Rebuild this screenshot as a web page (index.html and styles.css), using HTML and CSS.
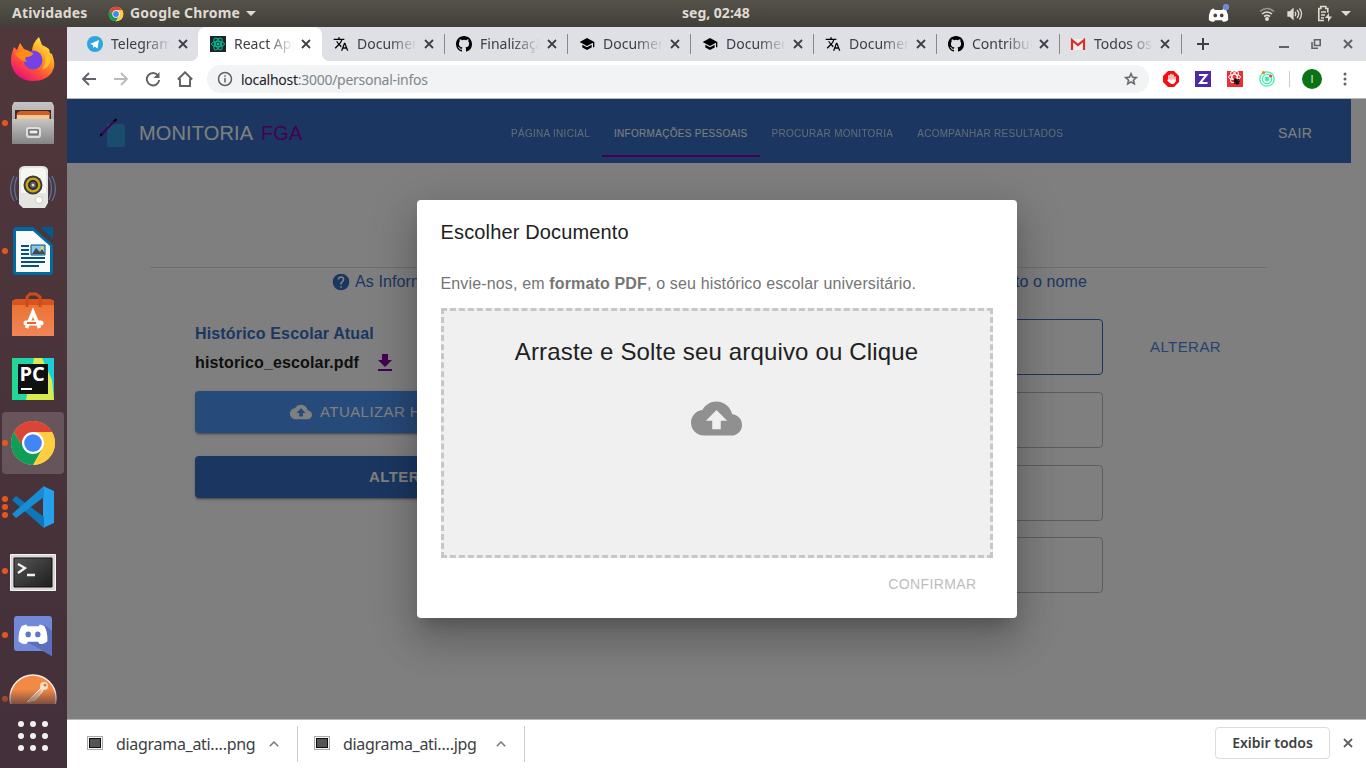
FILE: index.html
```html
<!DOCTYPE html>
<html lang="pt-BR">
<head>
<meta charset="utf-8">
<title>Monitoria FGA</title>
<link rel="stylesheet" href="styles.css">
</head>
<body>
<svg class="defs" width="0" height="0">
  <defs>
    <symbol id="close" viewBox="0 0 16 16"><path d="M4 4l8 8M12 4l-8 8" fill="none" stroke="currentColor" stroke-width="1.8"/></symbol>
    <symbol id="translate" viewBox="0 0 24 24"><path d="M12.87 15.07l-2.54-2.51.03-.03A17.52 17.52 0 0 0 14.07 6H17V4h-7V2H8v2H1v2h11.17C11.5 7.92 10.44 9.75 9 11.35 8.07 10.32 7.3 9.19 6.69 8h-2c.73 1.63 1.73 3.17 2.98 4.56l-5.09 5.02L4 19l5-5 3.11 3.11.76-2.04zM18.5 10h-2L12 22h2l1.12-3h4.75L21 22h2l-4.500-12zm-2.620 7l1.620-4.330L19.120 17h-3.240z"/></symbol>
    <symbol id="github" viewBox="0 0 16 16"><path d="M8 0C3.580 0 0 3.580 0 8c0 3.540 2.290 6.530 5.470 7.590.4.070.550-.170.550-.380 0-.190-.010-.820-.010-1.490-2.010.370-2.530-.490-2.690-.940-.090-.230-.480-.940-.820-1.130-.280-.150-.680-.520-.010-.530.630-.010 1.080.580 1.230.820.720 1.210 1.870.870 2.330.660.070-.520.280-.870.510-1.070-1.780-.2-3.640-.890-3.640-3.950 0-.870.310-1.590.820-2.150-.080-.2-.360-1.020.080-2.120 0 0 .670-.210 2.200.820a7.600 7.600 0 0 1 4 0c1.530-1.040 2.200-.820 2.200-.820.440 1.100.160 1.920.080 2.120.510.560.820 1.270.820 2.150 0 3.070-1.870 3.750-3.650 3.950.290.250.540.730.540 1.480 0 1.070-.010 1.930-.010 2.200 0 .210.150.460.550.380A8 8 0 0 0 16 8c0-4.420-3.580-8-8-8z"/></symbol>
    <symbol id="school" viewBox="0 0 24 24"><path d="M5 13.180v4L12 21l7-3.820v-4L12 17l-7-3.820zM12 3L1 9l11 6 9-4.910V17h2V9L12 3z"/></symbol>
    <symbol id="cloud" viewBox="0 0 24 24"><path d="M19.350 10.040C18.670 6.590 15.640 4 12 4 9.110 4 6.600 5.640 5.350 8.040 2.340 8.360 0 10.910 0 14c0 3.310 2.690 6 6 6h13c2.760 0 5-2.240 5-5 0-2.640-2.050-4.780-4.650-4.960zM14 13v4h-4v-4H7l5-5 5 5h-3z"/></symbol>
    <symbol id="chrome" viewBox="0 0 48 48"><circle cx="24" cy="24" r="22" fill="#ffcd40"/><path d="M4.950 13A22 22 0 0 1 43.050 13H24L14.500 29.500z" fill="#db4437"/><path d="M4.950 13A22 22 0 0 0 24 46L33.500 29.500 24 24H11.300z" fill="#0f9d58"/><path d="M24 13h19.050A22 22 0 0 1 24 46L33.500 29.500z" fill="#ffcd40"/><circle cx="24" cy="24" r="11" fill="#fff"/><circle cx="24" cy="24" r="8.800" fill="#4285f4"/></symbol>
    <symbol id="discord" viewBox="0 0 32 24"><path d="M9 2.500Q6 3 4 4.500Q.5 11 1 20Q4 23 9 23l1.800-2.500h10.400L23 23q5 0 8-3 .5-9-3-15.500Q26 3 23 2.500l-1 2H10z" fill="#fff"/><ellipse cx="11" cy="13" rx="2.800" ry="3" fill="var(--eye)"/><ellipse cx="21" cy="13" rx="2.800" ry="3" fill="var(--eye)"/></symbol>
    <symbol id="picture" viewBox="0 0 16 14"><rect x=".5" y=".5" width="15" height="13" fill="#f5f5f5" stroke="#aaa"/><rect x="2.500" y="2.500" width="11" height="9" fill="#555" stroke="#111"/></symbol>
    <linearGradient id="fire" x1="1" y1="0" x2=".3" y2="1"><stop offset=".1" stop-color="#fff44f"/><stop offset=".45" stop-color="#ff9a20"/><stop offset=".75" stop-color="#ff4540"/><stop offset="1" stop-color="#e8107d"/></linearGradient>
    <linearGradient id="metal" x1="0" y1="0" x2="0" y2="1"><stop offset="0" stop-color="#c4c4c4"/><stop offset="1" stop-color="#858585"/></linearGradient>
    <linearGradient id="orange" x1="0" y1="0" x2="0" y2="1"><stop offset="0" stop-color="#e8702c"/><stop offset="1" stop-color="#f28558"/></linearGradient>
    <linearGradient id="dark" x1="0" y1="0" x2="1" y2="1"><stop offset="0" stop-color="#555"/><stop offset="1" stop-color="#1e1e1e"/></linearGradient>
    <linearGradient id="jet" x1="0" y1="0" x2="1" y2="0"><stop offset="0" stop-color="#22d88f"/><stop offset="1" stop-color="#18cfe0"/></linearGradient>
  </defs>
</svg>

<header class="topbar">
  <span class="topbar-act">Atividades</span>
  <svg class="topbar-chrome"><use href="#chrome"/></svg>
  <span class="topbar-app">Google Chrome</span>
  <i class="caret"></i>
  <span class="topbar-clock">seg, 02:48</span>
  <div class="tray">
    <svg width="22" height="20" viewBox="0 0 22 20" style="--eye:#46443d"><use href="#discord" x="0" y="3" width="21" height="15.500"/><circle cx="18" cy="3" r="3.200" fill="#7289da"/></svg>
    <svg class="tray-wifi" width="16" height="14" viewBox="0 0 16 14" fill="none" stroke="#dfdbd2" stroke-width="1.600"><path d="M1 4.500q7-6 14 0" opacity=".5"/><path d="M3 7q5-4 10 0M5 9.500q3-2.200 6 0"/><circle cx="8" cy="12" r="1.200" fill="#dfdbd2"/></svg>
    <svg class="tray-vol" width="16" height="14" viewBox="0 0 16 14" fill="none" stroke="#dfdbd2" stroke-width="1.300"><path d="M1 5h2l3-3v10L3 9H1z" fill="#dfdbd2"/><path d="M8 5q1.500 2 0 4M10 3q3.500 4 0 8M12.500 1.500q4 5.500 0 11"/></svg>
    <svg class="tray-bat" width="15" height="17" viewBox="0 0 15 17" fill="none" stroke="#dfdbd2" stroke-width="1.600"><path d="M7 15.500H1.800V3.500h2V1.500h5v2h2v4M4 7h5M4 10h4M4 13h3"/><path d="M12 8l-4 5h3v4l4-5.500h-3z" fill="#dfdbd2" stroke="none"/></svg>
    <i class="caret"></i>
  </div>
</header>

<div class="desktop">
  <nav class="dock">
    <div class="dock-item"><svg viewBox="0 0 48 48"><path d="M24 46C11 46 2 37 2 25c0-6 2-10 3-13l3 3 3-7 4 6 8 3q0-9 7-15l3 8 4 2 3 2 1 4 2 1q4 10 1 16C41 43 32 46 24 46z" fill="url(#fire)"/><circle cx="24" cy="25" r="9.500" fill="#7542e5"/><path d="M6 19q6-5 13-3l5 2c0 3-4 4-7 4q-2 2 1 5-7-1-12-8z" fill="#ff8a16"/><path d="M33 15q7 9 0 20 8-3 9-12z" fill="#ffc02c"/></svg></div>
    <div class="dock-item run"><svg viewBox="0 0 48 48"><path d="M5 3h38l2 4v38H3V7z" fill="url(#metal)"/><path d="M6 11h36v10H6z" fill="#392d2a"/><path d="M8 14l3-2h28l2 2v7H7z" fill="#d15f25"/><path d="M8 16h32v4H8z" fill="#f3ca94"/><path d="M3 20h42v25H3z" fill="url(#metal)"/><rect x="18" y="29" width="13" height="9" rx="2" fill="#999" stroke="#ddd" stroke-width="2"/><path d="M20 31h9v4h-9z" fill="#eee" stroke="#555"/></svg></div>
    <div class="dock-item"><svg viewBox="0 0 48 48"><path d="M5 13q-7 13 0 25M8 14q-5 11 0 23M43 13q7 13 0 25M40 14q5 11 0 23" fill="none" stroke="#59739b" stroke-width="1.300"/><path d="M10 7q1-4 6-4h17q5 0 6 4v33l-3 5H14l-4-4z" fill="#e4e4e1"/><path d="M12 8q1-3 5-3h15q4 0 5 3v22H12z" fill="#f6f6f4"/><circle cx="24" cy="22" r="9.500" fill="#3b3c3a"/><circle cx="24" cy="22" r="7.500" fill="#c5a51a"/><circle cx="24" cy="22" r="4.200" fill="#555" stroke="#222" stroke-width="1.500"/><circle cx="24" cy="22" r="1.500" fill="#ddd"/><circle cx="30" cy="37" r="3.500" fill="#fff" stroke="#ccc"/></svg></div>
    <div class="dock-item run"><svg viewBox="0 0 48 48"><path d="M6 0h19l19 17v28q0 3-3 3H7q-3 0-3-3V3z" fill="#0369a3"/><path d="M24 0l20 18V12L31 0z" fill="#4b353a"/><path d="M31 0h13v12z" fill="#06598c"/><path d="M7 4h17l17 15v26H7z" fill="#fafafa"/><path d="M24 4l17 15V19z" fill="#ddd"/><path d="M12 19h8M12 23h8M12 27h8M12 31h24M12 35h24M12 39h18" stroke="#05517f" stroke-width="2"/><path d="M22 18h14v10H22z" fill="#82c8ee" stroke="#05517f"/><path d="M23 27l4-6 4 4 2-3 3 5z" fill="#424b48"/><circle cx="33" cy="21" r="1.500" fill="#ffd320"/></svg></div>
    <div class="dock-item"><svg viewBox="0 0 48 48"><path d="M3 10l4-2h34l4 2v35H3z" fill="url(#orange)"/><path d="M3 10l4-2h34l4 2v4H3z" fill="#d9531e"/><path d="M18 16V6l3-3h6l4 3v10" fill="none" stroke="#ce4b1b" stroke-width="3"/><path d="M17.500 37l6.500-16 6.500 16" fill="none" stroke="#fff" stroke-width="3.500"/><path d="M17 32h15" stroke="#fff" stroke-width="5" stroke-linecap="round"/><path d="M18 32h9" stroke="#e8622a" stroke-width="2"/></svg></div>
    <div class="dock-item"><svg viewBox="0 0 48 48"><path d="M3 3h42v42H3z" fill="url(#jet)"/><path d="M25 3h8l10 22 2 20H17z" fill="#d8ed4d"/><path d="M9 9h30v30H9z" fill="#101010"/><text x="10.500" y="26" class="pc-text">PC</text><path d="M12 34h11" stroke="#fff" stroke-width="2"/></svg></div>
    <div class="dock-item run active"><svg viewBox="0 0 48 48"><use href="#chrome" x="0" y="0" width="48" height="48"/></svg></div>
    <div class="dock-item run multi"><svg viewBox="0 0 48 48"><path d="M34 3l11 5v32l-11 5z" fill="#27a0ec"/><path d="M3 17l4-4 28 21v11z" fill="#0d77ba"/><path d="M3 31l4 4 28-21V3z" fill="#198dd4"/></svg></div>
    <div class="dock-item run"><svg viewBox="0 0 48 48"><path d="M1.500 7.500h45v36h-45z" fill="#d8d8d6" stroke="#f4f4f4"/><path d="M5 11h38v29H5z" fill="url(#dark)" stroke="#111"/><path d="M9 17l7 4-7 5M18 28h8" fill="none" stroke="#f1f1ee" stroke-width="2.300"/></svg></div>
    <div class="dock-item run"><svg viewBox="0 0 48 48" style="--eye:#6077c5"><path d="M8 5h32q3 0 3 3v37l-9-5H8q-3 0-3-3V8q0-3 3-3z" fill="#7289da"/><path d="M18 31l16 9 9 5V20L36 14z" fill="#5b70bd"/><use href="#discord" x="8.500" y="11" width="31" height="23"/></svg></div>
    <div class="dock-item run last"><svg viewBox="0 0 48 48"><circle cx="24" cy="24" r="23" fill="#f28a45" stroke="#f7eee8" stroke-width="1.500"/><path d="M32 14L18 28l8-2 8-9z" fill="#f5c6a2" stroke="#fff"/><circle cx="35" cy="12" r="4" fill="#f7dfcb"/><circle cx="36" cy="11" r="1.500" fill="#d17b40"/></svg></div>
    <div class="dock-apps"><i></i><i></i><i></i><i></i><i></i><i></i><i></i><i></i><i></i></div>
  </nav>

  <main class="browser">
    <div class="tabs">
      <div class="tab"><svg class="fav" viewBox="0 0 16 16"><circle cx="8" cy="8" r="8" fill="#2ca5e0"/><path d="M3 8l9-4-1.500 8.500-3-2-1.500 1.500v-3z" fill="#fff"/></svg><span>Telegram</span><svg class="x"><use href="#close"/></svg></div>
      <div class="tab current"><svg class="fav" viewBox="0 0 16 16"><path d="M0 0h16v16H0z" fill="#20232a"/><g fill="none" stroke="#00c49a"><ellipse cx="8" cy="8" rx="6.500" ry="2.700"/><ellipse cx="8" cy="8" rx="6.500" ry="2.700" transform="rotate(60 8 8)"/><ellipse cx="8" cy="8" rx="6.500" ry="2.700" transform="rotate(120 8 8)"/></g><circle cx="8" cy="8" r="1.500" fill="#00c49a"/></svg><span>React App</span><svg class="x"><use href="#close"/></svg></div>
      <div class="tab sep"><svg class="fav"><use href="#translate"/></svg><span>Documento</span><svg class="x"><use href="#close"/></svg></div>
      <div class="tab sep"><svg class="fav"><use href="#github"/></svg><span>Finalização</span><svg class="x"><use href="#close"/></svg></div>
      <div class="tab sep"><svg class="fav"><use href="#school"/></svg><span>Documento</span><svg class="x"><use href="#close"/></svg></div>
      <div class="tab sep"><svg class="fav"><use href="#school"/></svg><span>Documento</span><svg class="x"><use href="#close"/></svg></div>
      <div class="tab sep"><svg class="fav"><use href="#translate"/></svg><span>Documento</span><svg class="x"><use href="#close"/></svg></div>
      <div class="tab sep"><svg class="fav"><use href="#github"/></svg><span>Contributors</span><svg class="x"><use href="#close"/></svg></div>
      <div class="tab sep final"><svg class="fav" viewBox="0 0 16 16"><path d="M1 3h14v11H1z" fill="#eee"/><path d="M2 14V4l6 5 6-5v10" fill="none" stroke="#d93025" stroke-width="2.200"/></svg><span>Todos os</span><svg class="x"><use href="#close"/></svg></div>
      <svg class="plus" viewBox="0 0 14 14"><path d="M7 1v12M1 7h12" stroke="#3c4043" stroke-width="2"/></svg>
      <div class="win">
        <svg width="10" height="10"><path d="M0 8h10" stroke="#5f6368" stroke-width="2"/></svg>
        <svg width="10" height="10" fill="none" stroke="#5f6368" stroke-width="1.600"><path d="M3.500.8h5.700v5.700H3.500zM1 3v6.200h6"/></svg>
        <svg width="10" height="10"><path d="M1 1l8 8M9 1l-8 8" stroke="#5f6368" stroke-width="2"/></svg>
      </div>
    </div>

    <div class="toolbar">
      <svg class="tool" viewBox="0 0 16 16"><path d="M15 8H2M8 2L2 8l6 6"/></svg>
      <svg class="tool dim" viewBox="0 0 16 16"><path d="M1 8h13M8 2l6 6-6 6"/></svg>
      <svg class="tool" viewBox="0 0 16 16"><path d="M13 4.500A6.200 6.200 0 1 0 14.200 9"/><path d="M14.500 1v6h-6z" fill="#5f6368" stroke="none"/></svg>
      <svg class="tool" viewBox="0 0 16 16"><path d="M.8 8.500L8 1.300l7.200 7.200M3 7.500V15h10V7.500"/></svg>
      <div class="omni">
        <svg width="16" height="16" viewBox="0 0 16 16" fill="none" stroke="#5f6368" stroke-width="1.500"><circle cx="8" cy="8" r="6.500"/><path d="M8 7v4.500M8 4.200v1.600"/></svg>
        <span class="url"><b>localhost</b>:3000/personal-infos</span>
        <svg class="star" width="16" height="16" viewBox="0 0 24 24"><path d="M22 9.240l-7.190-.620L12 2 9.190 8.630 2 9.240l5.460 4.730L5.820 21 12 17.270 18.180 21l-1.630-7.030L22 9.240zM12 15.400l-3.760 2.270 1-4.280-3.320-2.880 4.380-.380L12 6.100l1.710 4.040 4.380.380-3.320 2.880 1 4.280L12 15.400z" fill="#5f6368" stroke="#5f6368" stroke-width=".7"/></svg>
      </div>
      <svg class="ext" viewBox="0 0 16 16"><path d="M5 0h6l5 5v6l-5 5H5l-5-5V5z" fill="#f40d12"/><path d="M6 4.500v5M8 3.500v5M10 4v5M12 6v4" stroke="#fff" stroke-width="1.400" stroke-linecap="round"/><path d="M5.300 8.500h7.400q0 4.500-3.500 4.500Q7 13 4 9z" fill="#fff"/></svg>
      <svg class="ext" viewBox="0 0 16 16"><path d="M0 0h16v16H0z" fill="#4c2ba1"/><path d="M4 4h7.500L5 12h7.500" fill="none" stroke="#fff" stroke-width="2"/></svg>
      <svg class="ext" viewBox="0 0 16 16"><path d="M0 0h16v16H0z" fill="#ec2f35"/><g fill="none" stroke="#fff"><ellipse cx="7.500" cy="6" rx="6" ry="2.500"/><ellipse cx="7.500" cy="6" rx="6" ry="2.500" transform="rotate(60 7.500 6)"/><ellipse cx="7.500" cy="6" rx="6" ry="2.500" transform="rotate(120 7.500 6)"/></g><ellipse cx="9.500" cy="10.500" rx="2.300" ry="3.500" fill="#211" transform="rotate(-35 9.500 10.500)"/><path d="M6 10h7M7 13l5-5" stroke="#211"/></svg>
      <svg class="ext" viewBox="0 0 16 16" fill="none" stroke="#3df0a8" stroke-width="1.300"><circle cx="8" cy="8" r="7.200"/><circle cx="8" cy="8" r="4.600"/><circle cx="8" cy="8" r="1.800" fill="#37e5c0"/><circle cx="4.500" cy="1.700" r="1.600" fill="#ff7a1a" stroke="none"/><circle cx="11.500" cy="5" r="1.500" fill="#f33a3a" stroke="none"/></svg>
      <i class="tool-sep"></i>
      <span class="avatar">I</span>
      <svg class="dots" viewBox="0 0 4 16"><circle cx="2" cy="3" r="1.500"/><circle cx="2" cy="8" r="1.500"/><circle cx="2" cy="13" r="1.500"/></svg>
    </div>

    <section class="page">
      <div class="appbar">
        <svg class="logo" width="28" height="32" viewBox="0 0 28 32"><path d="M7 6h15q3 0 3 3v18q0 2-2 2H7z" fill="#3498da"/><path d="M1 17L16 1.500" stroke="#80a" stroke-width="2"/><path d="M0 18l2-2M14 3.500l2.500-2.500" stroke="#000" stroke-width="2"/></svg>
        <span class="brand">MONITORIA <em>FGA</em></span>
        <nav class="menu"><a>PÁGINA INICIAL</a><a class="on">INFORMAÇÕES PESSOAIS</a><a>PROCURAR MONITORIA</a><a>ACOMPANHAR RESULTADOS</a></nav>
        <span class="exit">SAIR</span>
      </div>
      <div class="content">
        <div class="hints">
          <span class="hint"><svg width="20" height="20" viewBox="0 0 24 24"><path d="M12 2a10 10 0 1 0 0 20 10 10 0 0 0 0-20zm1 17h-2v-2h2v2zm2.070-7.750l-.9.920C13.450 12.900 13 13.500 13 15h-2v-.500c0-1.100.450-2.100 1.170-2.830l1.240-1.260c.370-.360.590-.860.590-1.410 0-1.100-.9-2-2-2s-2 .9-2 2H8a4 4 0 0 1 8 0c0 .880-.360 1.680-.930 2.250z"/></svg>As Inform</span>
          <span class="hint">to o nome</span>
        </div>
        <div class="cols">
          <div class="left">
            <h3>Histórico Escolar Atual</h3>
            <p class="file">historico_escolar.pdf<svg width="24" height="24" viewBox="0 0 24 24"><path d="M19 9h-4V3H9v6H5l7 7 7-7zM5 18v2h14v-2H5z"/></svg></p>
            <div class="btn light"><svg width="22" height="22"><use href="#cloud"/></svg><span>ATUALIZAR HISTÓRICO</span></div>
            <div class="btn strong"><span>ALTERAR SENHA</span></div>
          </div>
          <div class="fields"><div class="field focus"></div><div class="field"></div><div class="field"></div><div class="field"></div></div>
          <span class="change">ALTERAR</span>
        </div>
      </div>
      <div class="backdrop">
        <div class="dialog">
          <h2>Escolher Documento</h2>
          <p class="lead">Envie-nos, em <b>formato PDF</b>, o seu histórico escolar universitário.</p>
          <div class="drop"><span>Arraste e Solte seu arquivo ou Clique</span><svg width="51" height="51"><use href="#cloud"/></svg></div>
          <div class="confirm">CONFIRMAR</div>
        </div>
      </div>
    </section>

    <footer class="shelf">
      <div class="dl"><svg class="pic"><use href="#picture"/></svg><span class="dl-name">diagrama_ati….png</span><svg class="chev" viewBox="0 0 10 6"><path d="M.8 5.200L5 1l4.200 4.200"/></svg></div>
      <div class="dl"><svg class="pic"><use href="#picture"/></svg><span class="dl-name">diagrama_ati….jpg</span><svg class="chev" viewBox="0 0 10 6"><path d="M.8 5.200L5 1l4.200 4.200"/></svg></div>
      <span class="all">Exibir todos</span>
      <svg class="shelf-x" width="10" height="10"><path d="M1 1l8 8M9 1l-8 8" stroke="#5f6368" stroke-width="1.800"/></svg>
    </footer>
  </main>
</div>
</body>
</html>
```
FILE: styles.css
```css
* { box-sizing: border-box; }
body { margin: 0; width: 1366px; height: 768px; overflow: hidden; font-family: "Noto Sans", "Open Sans", sans-serif; }
svg { display: block; flex: none; }
.defs { position: absolute; }
h2, h3, p { margin: 0; }

/* system bar */
.topbar { height: 27px; display: grid; grid-template-columns: auto auto auto auto 1fr auto; align-items: center; padding: 0 15px 0 12px; background: linear-gradient(#55524a, #413f39); color: #dfdbd2; font-weight: 700; font-size: 14px; white-space: nowrap; }
.topbar span { line-height: 24px; padding-bottom: 2px; }
.topbar-act { width: 96px; letter-spacing: .2px; }
.topbar-chrome { width: 16px; height: 16px; margin-right: 6px; }
.topbar-app { width: 111px; letter-spacing: .2px; }
.caret { border: 5px solid transparent; border-top-color: #dfdbd2; border-bottom: 0; margin-left: 5px; }
.topbar-clock { padding-left: 426px; letter-spacing: 0; }
.tray { display: flex; align-items: center; }
.tray-wifi { margin-left: 29px; }
.tray-vol { margin-left: 12px; }
.tray-bat { margin-left: 14px; }
.tray .caret { margin-left: 9px; }

.desktop { display: flex; height: 741px; }

/* launcher */
.dock { width: 67px; flex: none; background: linear-gradient(#50373b, #43303a); display: flex; flex-direction: column; }
.dock-item { height: 64px; flex: none; position: relative; display: flex; align-items: center; justify-content: center; padding-right: 1px; }
.dock-item svg { width: 48px; height: 48px; }
.run::before { content: ""; position: absolute; left: 2px; top: 29px; width: 6px; height: 6px; border-radius: 50%; background: #e95420; }
.multi::before { box-shadow: 0 -8px #e95420, 0 8px #e95420; }
.active::after { content: ""; position: absolute; left: 2px; top: 1px; width: 62px; height: 62px; border-radius: 4px; background: rgba(255, 255, 255, .17); }
.active svg, .active::before { z-index: 1; }
.active svg { position: relative; }
.last { height: 37px; overflow: hidden; align-items: flex-start; padding-top: 7px; -webkit-mask: linear-gradient(#000 60%, rgba(0, 0, 0, .35)); }
.pc-text { font: 700 20px "Open Sans", sans-serif; fill: #fff; }
.dock-apps { height: 64px; display: grid; grid-template-columns: repeat(3, 6px); grid-auto-rows: 6px; gap: 6px; justify-content: center; align-content: center; padding-right: 1px; }
.dock-apps i { background: #f2f0ee; border-radius: 50%; }

/* browser frame */
.browser { flex: 1; min-width: 0; display: flex; flex-direction: column; background: #fff; }
.tabs { height: 34px; display: flex; align-items: center; background: #dee0e6; padding-left: 8px; color: #3c4043; font-size: 14px; }
.tab { width: 123px; height: 34px; flex: none; display: flex; align-items: center; padding-left: 12px; position: relative; }
.tab span { width: 60px; margin-left: 8px; margin-top: -1px; overflow: hidden; white-space: nowrap; -webkit-mask: linear-gradient(90deg, #000 55%, transparent); }
.fav { width: 16px; height: 16px; }
.x { width: 16px; height: 16px; margin-left: 4px; }
.current { background: #fff; border-radius: 8px 8px 0 0; width: 124px; margin-right: -1px; }
.current::before, .current::after { content: ""; position: absolute; bottom: 0; width: 8px; height: 8px; }
.current::before { left: -8px; background: radial-gradient(circle at 0 0, #dee0e6 8px, #fff 8.5px); }
.current::after { right: -8px; background: radial-gradient(circle at 100% 0, #dee0e6 8px, #fff 8.5px); }
.sep::after { content: ""; position: absolute; right: -1px; top: 7px; width: 1px; height: 20px; background: #85888d; }
.final { padding-left: 11px; }
.final::after { right: 0; }
.final .x { margin-left: 3px; }
.plus { width: 14px; height: 14px; margin-left: 14px; }
.win { display: flex; margin-left: auto; gap: 22px; padding-right: 13px; }

.toolbar { height: 38px; border-bottom: 1px solid #b4b6ba; display: flex; align-items: center; padding: 0 0 1px 14px; }
.tool { width: 16px; height: 16px; margin-right: 16px; fill: none; stroke: #5f6368; stroke-width: 1.9; }
.dim { stroke: #b9bbbe; }
.omni { width: 942px; height: 28px; margin-left: -2px; border-radius: 14px; background: #f1f3f4; display: flex; align-items: center; padding: 0 10px; }
.url { margin-left: 8px; font-size: 14px; letter-spacing: -.27px; color: #80868b; }
.url b { font-weight: 400; color: #202124; }
.star { margin-left: auto; }
.ext { width: 16px; height: 16px; margin-left: 16px; }
.omni + .ext { margin-left: 14px; }
.tool-sep { width: 1px; height: 16px; background: #ccc; margin-left: 14px; }
.avatar { width: 20px; height: 20px; border-radius: 50%; margin-left: 12px; background: #0b7215; color: #d5e8d5; font: 11px/20px "Liberation Sans", Arial, sans-serif; text-align: center; }
.dots { width: 4px; height: 16px; margin-left: 21px; fill: #5f6368; }

/* application page */
.page { height: 620px; position: relative; overflow: hidden; font-family: "Liberation Sans", Arial, sans-serif; color: #212121; }
.appbar { width: 1284px; height: 64px; background: #366fc3; display: flex; align-items: center; color: #fff; padding-left: 33px; }
.logo { margin-top: 6px; }
.brand { width: 359px; padding-left: 11px; font-size: 20px; letter-spacing: .15px; margin-top: 4px; }
.brand em { font-style: normal; color: #80a; margin-left: 3px; }
.menu { width: 766px; display: flex; padding-left: 12px; font-size: 10px; letter-spacing: .286px; }
.menu a { flex: none; padding: 1px 12px 0; height: 48px; line-height: 48px; margin-top: 4px; opacity: .7; }
.menu .on { opacity: 1; border-bottom: 2px solid #80a; }
.exit { font-size: 14px; letter-spacing: .4px; margin-top: 4px; margin-left: 13px; padding-left: 12px; }
.content { margin: 104px 99px 0 83px; border-top: 1px solid #dedede; }
.hints { display: flex; justify-content: space-between; align-items: center; height: 28px; padding: 0 180px 0 181px; font-size: 16px; color: #366fc3; }
.hint { display: flex; align-items: center; gap: 4px; letter-spacing: .1px; }
.hint svg { fill: #366fc3; }
.cols { display: flex; padding: 23px 0 0 45px; }
.left { width: 442px; flex: none; font-weight: 700; font-size: 16px; letter-spacing: .15px; }
.left h3 { font-size: 16px; line-height: 29px; color: #366fc3; }
.file { display: flex; align-items: center; gap: 14px; height: 29px; margin-bottom: 14px; }
.file svg { fill: #80a; }
.btn { height: 42px; border-radius: 4px; display: flex; align-items: center; color: #fff; font-size: 15px; letter-spacing: .43px; box-shadow: 0 3px 1px -2px rgba(0, 0, 0, .2), 0 2px 2px rgba(0, 0, 0, .14), 0 1px 5px rgba(0, 0, 0, .12); }
.btn span { padding-bottom: 2px; }
.light { background: #4c94f2; font-weight: 400; padding-left: 95px; gap: 8px; margin-bottom: 23px; }
.light svg, .drop svg { fill: currentColor; }
.strong { background: #366fc3; padding-left: 174px; }
.fields { width: 340px; margin-left: 126px; display: grid; grid-auto-rows: 56px; gap: 16.8px; }
.field { border: 1px solid #bbb; border-radius: 4px; }
.focus { border-color: #366fc3; }
.change { margin-left: 47px; height: 56px; line-height: 56px; font-size: 15px; letter-spacing: .43px; color: #4c86df; }

.backdrop { position: absolute; inset: 0; background: rgba(0, 0, 0, .5); display: flex; align-items: center; justify-content: center; }
.dialog { width: 600px; height: 418px; padding: 16px 24px; background: #fff; border-radius: 4px; box-shadow: 0 11px 15px -7px rgba(0, 0, 0, .2), 0 24px 38px 3px rgba(0, 0, 0, .14), 0 9px 46px 8px rgba(0, 0, 0, .12); }
.dialog h2 { font-size: 20px; font-weight: 400; line-height: 32px; letter-spacing: .15px; }
.lead { margin: 24px 0 12px; font-size: 16px; line-height: 24px; letter-spacing: .15px; color: #757575; }
.drop { height: 250px; border: 3px dashed #c7c7c7; background: #f0f0f0; display: flex; flex-direction: column; align-items: center; padding-top: 25px; font-size: 24px; line-height: 32px; letter-spacing: .16px; }
.drop svg { margin-top: 25px; color: #909090; }
.confirm { text-align: right; padding: 10px 16px 0; font-size: 14px; line-height: 32px; letter-spacing: .4px; color: #bdbdbd; }

/* download shelf */
.shelf { height: 49px; border-top: 1px solid #b4b6ba; display: flex; align-items: center; color: #3c4043; padding-right: 13px; }
.dl { height: 36px; display: flex; align-items: center; padding-left: 20px; border-right: 1px solid #ccc; width: 231px; }
.dl + .dl { width: 227px; padding-left: 16px; }
.pic { width: 16px; height: 14px; margin-top: -3px; }
.dl-name { width: 148px; padding-left: 13px; font-size: 16px; letter-spacing: -.3px; white-space: nowrap; margin-right: 18px; }
.chev { width: 10px; height: 6px; fill: none; stroke: #777; stroke-width: 1.5; }
.all { margin-left: auto; width: 115px; height: 32px; line-height: 30px; margin-top: -2px; border: 1px solid #dadce0; border-radius: 4px; text-align: center; font-size: 14px; font-weight: 600; }
.shelf-x { margin-left: 13px; margin-top: -2px; }
```
